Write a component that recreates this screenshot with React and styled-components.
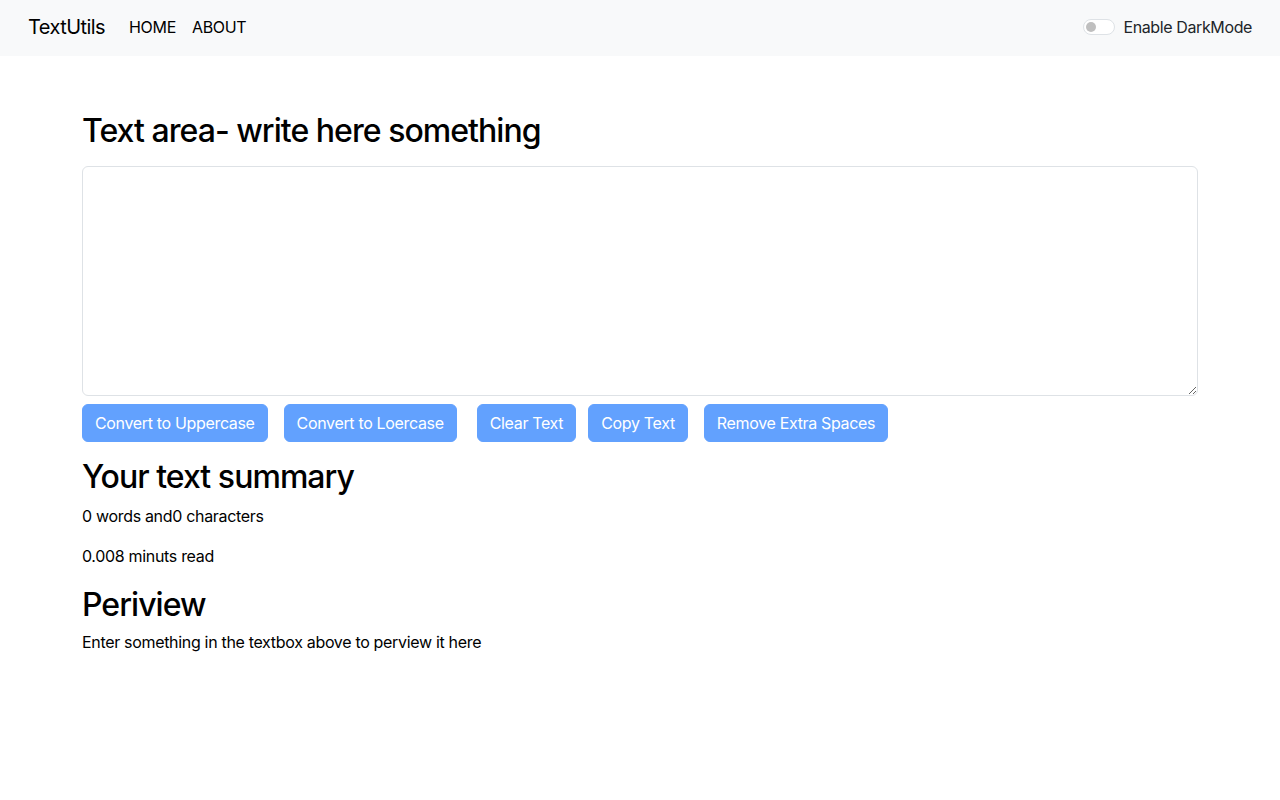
import { useState } from "react";
import styled, { createGlobalStyle } from "styled-components";

const GlobalStyle = createGlobalStyle`
  * { box-sizing: border-box; }
  body {
    margin: 0;
    font-family: Inter, "Noto Sans", "Liberation Sans", sans-serif;
    font-size: 16px;
    line-height: 1.5;
    letter-spacing: -0.02em;
    color: #000;
    background: #fff;
  }
`;

const Navbar = styled.nav`
  height: 56px;
  background: #f8f9fa;
  display: flex;
  align-items: center;
  padding: 0 28px 2px;
`;

const Brand = styled.a`
  font-size: 20px;
  letter-spacing: -0.028em;
  color: #000;
  text-decoration: none;
  margin-right: 16px;
`;

const NavLinks = styled.div`
  display: flex;
  flex: 1;
`;

const NavLink = styled.a`
  padding: 8px;
  color: #000;
  text-decoration: none;
  font-size: 16px;
`;

const SwitchWrap = styled.label`
  display: flex;
  align-items: center;
  gap: 8px;
  color: #212529;
  letter-spacing: -0.024em;
  cursor: pointer;
`;

const Switch = styled.span`
  width: 32px;
  height: 16px;
  border: 1px solid #dee2e6;
  border-radius: 8px;
  background: #fff;
  display: flex;
  align-items: center;
  padding: 0 2px;
  &::before {
    content: "";
    width: 10px;
    height: 10px;
    border-radius: 50%;
    background: #bfbfbf;
  }
`;

const Container = styled.div`
  width: 1140px;
  margin: ${(p) => p.$mt || 16}px auto 0;
  padding: 0 12px;
`;

const Heading = styled.h1`
  font-size: 32px;
  font-weight: 500;
  letter-spacing: -0.03em;
  line-height: 1.2;
  margin: 0 0 ${(p) => p.$mb}px;
`;

const TextArea = styled.textarea`
  display: block;
  width: 100%;
  height: 230px;
  padding: 6px 12px;
  font: inherit;
  letter-spacing: inherit;
  border: 1px solid #dee2e6;
  border-radius: 6px;
  margin-bottom: 8px;
  outline: none;
`;

const Buttons = styled.div`
  display: flex;
  margin-bottom: 4px;
`;

const Button = styled.button`
  margin-right: ${(p) => p.$gap}px;
  background: #62a1fe;
  border: 1px solid #62a1fe;
  color: #fff;
  font: inherit;
  letter-spacing: -0.021em;
  font-size: 16px;
  line-height: 24px;
  padding: 6px 12px;
  border-radius: 6px;
`;

const Para = styled.p`
  margin: 0 0 ${(p) => p.$mb || 16}px;
`;

export default function App() {
  const [text, setText] = useState("");
  const words = text.split(/\s+/).filter((w) => w.length).length;

  return (
    <>
      <GlobalStyle />
      <Navbar>
        <Brand href="#">TextUtils</Brand>
        <NavLinks>
          <NavLink href="#">HOME</NavLink>
          <NavLink href="#">ABOUT</NavLink>
        </NavLinks>
        <SwitchWrap>
          <Switch />
          Enable DarkMode
        </SwitchWrap>
      </Navbar>

      <Container $mt={56}>
        <Heading $mb={16}>Text area- write here something</Heading>
        <TextArea value={text} onChange={(e) => setText(e.target.value)} />
        <Buttons>
          <Button $gap={16}>Convert to Uppercase</Button>
          <Button $gap={20}>Convert to Loercase</Button>
          <Button $gap={12}>Clear Text</Button>
          <Button $gap={16}>Copy Text</Button>
          <Button $gap={0}>Remove Extra Spaces</Button>
        </Buttons>
      </Container>

      <Container $mt={16}>
        <Heading as="h2" $mb={7}>Your text summary</Heading>
        <Para>
          {words} words and{text.length} characters
        </Para>
        <Para $mb={18}>0.008 minuts read</Para>
        <Heading as="h2" $mb={6}>Periview</Heading>
        <Para>
          {text.length > 0 ? text : "Enter something in the textbox above to perview it here"}
        </Para>
      </Container>
    </>
  );
}
